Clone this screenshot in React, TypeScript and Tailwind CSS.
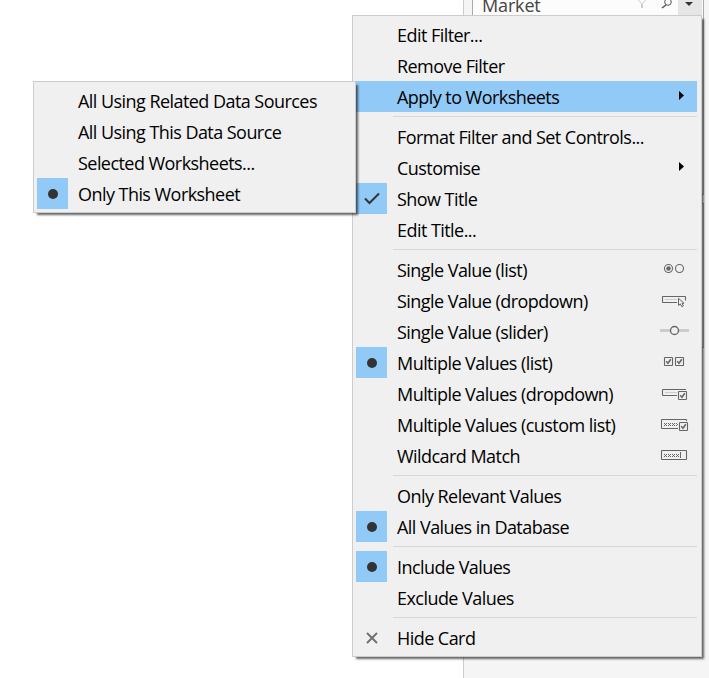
import type { ReactNode } from "react"

function Dot() {
  return <span className="h-2.5 w-2.5 rounded-full bg-[#333]" />
}

function Check() {
  return (
    <svg width="17" height="13" viewBox="0 0 17 13" fill="none" stroke="#333" strokeWidth="2">
      <path d="M2 6.5 L6.5 11 L16 1.5" />
    </svg>
  )
}

function Cross() {
  return (
    <svg width="12" height="12" viewBox="0 0 12 12" className="mt-px" fill="none" stroke="#707070" strokeWidth="1.9">
      <path d="M1 1 L11 11 M11 1 L1 11" />
    </svg>
  )
}

function Arrow() {
  return (
    <svg width="5" height="9" viewBox="0 0 5 9" className="mr-[13px] mb-0.5">
      <path d="M0 0 L5 4.5 L0 9 Z" fill="#000" />
    </svg>
  )
}

function Glyph({ children }: { children: ReactNode }) {
  return (
    <svg width="32" height="17" viewBox="0 0 32 17" className="mr-1.5 shrink-0" fill="none" stroke="#666">
      {children}
    </svg>
  )
}

// small ticked box, drawn at x/y
function Box({ x, y }: { x: number; y: number }) {
  return (
    <g transform={`translate(${x} ${y})`}>
      <rect x="-1" y="-1" width="10" height="10" fill="#f0f0f0" stroke="none" />
      <rect x="0.5" y="0.5" width="8" height="8" rx="0.5" strokeWidth="1.1" />
      <path d="M2.2 4.3 L4 6.2 L6.8 2.3" strokeWidth="1.6" />
    </g>
  )
}

// four 3px crosses in a row
function Crosses() {
  return (
    <g>
      <path d="M5 7.5h15M5 9.5h15" strokeDasharray="1 1" />
      <path d="M6 8.5h14" strokeDasharray="1 3" />
    </g>
  )
}

const glyphs = {
  radios: (
    <Glyph>
      <circle cx="9.5" cy="7.5" r="4" strokeWidth="1.1" />
      <circle cx="9.5" cy="7.5" r="2.2" fill="#666" stroke="none" />
      <circle cx="20.5" cy="7.5" r="4" strokeWidth="1.1" />
    </Glyph>
  ),
  dropdown: (
    <Glyph>
      <path d="M18 10.5H4a.5.5 0 0 1-.5-.5V5a.5.5 0 0 1 .5-.5h22a.5.5 0 0 1 .5.5v3.5" strokeWidth="1.1" />
      <path d="M6 7.5h12" stroke="#ccc" />
      <path d="M19.5 6.3v7.2l1.8-1.6 1.5 2.8 1.6-.8-1.4-2.6h2z" fill="#f0f0f0" />
    </Glyph>
  ),
  slider: (
    <Glyph>
      <path d="M1 7.5h29" stroke="#ccc" strokeWidth="3" />
      <circle cx="15.5" cy="7.5" r="4" fill="#f0f0f0" strokeWidth="1.3" />
    </Glyph>
  ),
  checks: (
    <Glyph>
      <Box x={5} y={3} />
      <Box x={16} y={3} />
    </Glyph>
  ),
  dropdownCheck: (
    <Glyph>
      <path d="M18 10.5H4a.5.5 0 0 1-.5-.5V5a.5.5 0 0 1 .5-.5h23" strokeWidth="1.1" />
      <path d="M6 7.5h12" stroke="#ccc" />
      <Box x={19} y={6} />
    </Glyph>
  ),
  customList: (
    <Glyph>
      <path d="M19 12.5H3a.5.5 0 0 1-.5-.5V4a.5.5 0 0 1 .5-.5h24a.5.5 0 0 1 .5.5v1" strokeWidth="1.1" />
      <Crosses />
      <Box x={20} y={6} />
    </Glyph>
  ),
  wildcard: (
    <Glyph>
      <rect x="2.5" y="3.5" width="25" height="9" rx=".5" strokeWidth="1.1" />
      <Crosses />
      <path d="M21.5 5v6" />
    </Glyph>
  ),
}

type RowProps = {
  label: string
  mark?: ReactNode
  right?: ReactNode
  active?: boolean
  marked?: boolean
}

function Row({ label, mark, right, active, marked }: RowProps) {
  return (
    <div className={active ? "flex h-[31px] items-center bg-[#91c9f7]" : "flex h-[31px] items-center"}>
      <div className={marked ? "flex h-[31px] w-[31px] items-center justify-center bg-[#91c9f7]" : "flex h-[31px] w-[31px] items-center justify-center"}>
        {mark}
      </div>
      <span className="ml-2.5 grow pt-0.5 whitespace-nowrap">{label}</span>
      {right}
    </div>
  )
}

function Separator() {
  return <div className="my-1 ml-[37px] h-px bg-[#d7d7d7]" />
}

const menuStyle = "absolute border border-[#ccc] bg-[#f0f0f0] py-[3px] pl-[3px] pr-1 shadow-[3px_3px_2px_-1px_rgba(0,0,0,0.6)]"

export default function App() {
  return (
    <div className="relative h-[678px] w-[709px] overflow-hidden bg-white font-['Open_Sans',sans-serif] text-[18px] leading-[31px] tracking-[-0.55px] text-black">
      <div className="ml-[463px] h-full border-l border-[#ccc] bg-[#f5f5f5] pl-2">
        <div className="flex h-[195px] w-[232px] border-x border-b border-[#aaa] bg-[#fcfcfc]">
          <span className="-mt-1 ml-[9px] grow leading-[18px] tracking-[-0.15px] text-[#444]">Market</span>
          <svg width="40" height="14" viewBox="0 0 40 14" fill="none">
            <path d="M-.5 -1L3.5 3.5V8M8.5 -1L4.5 3.5V8" stroke="#ccc" />
            <circle cx="30" cy="2" r="3.3" stroke="#555" />
            <path d="M28 5L24 8" stroke="#555" strokeWidth="1.5" />
          </svg>
          <div className="mr-px flex h-4 w-6 justify-center bg-[#e6e6e6] pt-0.5">
            <svg width="8" height="4" viewBox="0 0 8 4" className="-ml-0.5"><path d="M0 0h8L4 4z" fill="#333" /></svg>
          </div>
        </div>
        <div className="mt-2 h-[145px] w-[232px] border border-[#aaa] bg-[#fcfcfc]" />
      </div>

      <div className={`${menuStyle} top-[15px] left-[352px] h-[642px] w-[350px]`}>
        <Row label="Edit Filter..." />
        <Row label="Remove Filter" />
        <Row label="Apply to Worksheets" active right={<Arrow />} />
        <Separator />
        <Row label="Format Filter and Set Controls..." />
        <Row label="Customise" right={<Arrow />} />
        <Row label="Show Title" marked mark={<Check />} />
        <Row label="Edit Title..." />
        <Separator />
        <Row label="Single Value (list)" right={glyphs.radios} />
        <Row label="Single Value (dropdown)" right={glyphs.dropdown} />
        <Row label="Single Value (slider)" right={glyphs.slider} />
        <Row label="Multiple Values (list)" marked mark={<Dot />} right={glyphs.checks} />
        <Row label="Multiple Values (dropdown)" right={glyphs.dropdownCheck} />
        <Row label="Multiple Values (custom list)" right={glyphs.customList} />
        <Row label="Wildcard Match" right={glyphs.wildcard} />
        <Separator />
        <Row label="Only Relevant Values" />
        <Row label="All Values in Database" marked mark={<Dot />} />
        <Separator />
        <Row label="Include Values" marked mark={<Dot />} />
        <Row label="Exclude Values" />
        <Separator />
        <Row label="Hide Card" mark={<Cross />} />
      </div>

      <div className={`${menuStyle} top-[81px] left-[33px] h-[132px] w-[323px]`}>
        <Row label="All Using Related Data Sources" />
        <Row label="All Using This Data Source" />
        <Row label="Selected Worksheets..." />
        <Row label="Only This Worksheet" marked mark={<Dot />} />
      </div>
    </div>
  )
}
